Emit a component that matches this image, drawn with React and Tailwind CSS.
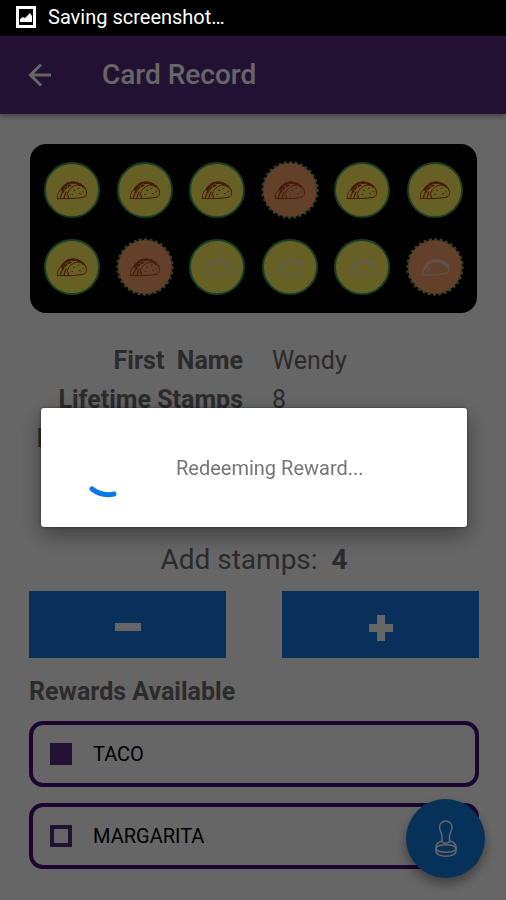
import { useState } from 'react';

const stamps = [
    { filled: true },
    { filled: true },
    { filled: true },
    { filled: true, reward: true },
    { filled: true },
    { filled: true },
    { filled: true },
    { filled: true, reward: true },
    { filled: false },
    { filled: false },
    { filled: false },
    { filled: false, reward: true },
];

const customer = [
    { label: 'First\u00a0 Name', value: 'Wendy' },
    { label: 'Lifetime Stamps', value: '8' },
    { label: 'Rewards Available', value: '2' },
];

function Taco({ color, filled }) {
    return (
        <svg viewBox="0 0 64 40" className={`absolute inset-0 m-auto w-8 h-5 ${color}`} fill="none" stroke="currentColor" strokeLinecap="round" strokeLinejoin="round">
            {filled ? (
                <>
                    <path d="M3 37 C12 38 48 37 56 34 C63 31 62 23 58 17 C51 6 38 2 27 5 C18 8 12 14 9 20 C3 26 2 32 3 37 Z" strokeWidth="2" />
                    <path d="M22 31 C24 20 31 12 43 10 C51 9 57 13 60 19" strokeWidth="2" />
                    <path d="M12 19 C16 12 22 7 28 6 C36 4 46 7 54 13" strokeWidth="5" strokeDasharray="7 5" />
                    <path d="M13 25 C17 17 23 12 32 10" strokeWidth="4" strokeDasharray="4 5" />
                    <path d="M17 31 L20 24 M9 35 L11 28 M16 36 L17 32 M24 36 L25 32" strokeWidth="2.500" />
                    <path d="M32 29 L33 29 M35 20 L37 21 M44 17 L46 16 M47 27 L49 28 M54 23 L54 24" strokeWidth="2" />
                </>
            ) : (
                <>
                    <path d="M12 22 C17 12 25 7 34 7 C45 7 52 11 57 18" strokeWidth="7" />
                    <path d="M5 35 C15 36 45 37 56 32 C60 29 60 23 57 18 M5 35 L12 22 M17 29 L22 20" strokeWidth="3" />
                </>
            )}
        </svg>
    );
}

function Stamp({ filled, reward }) {
    return (
        <div className="relative size-14">
            <svg viewBox="0 0 56 56" className="size-14 overflow-visible">
                <circle cx="28" cy="28" r="27" fill={reward ? '#f5a068' : '#fff05c'} />
                <circle
                    cx="28"
                    cy="28"
                    r={reward ? 27.5 : 27}
                    fill="none"
                    stroke={reward ? '#8a9a60' : '#38a060'}
                    strokeWidth={reward ? 2.5 : 2}
                    strokeLinecap="round"
                    strokeDasharray={reward ? '1 4.4' : undefined}
                />
            </svg>
            <Taco filled={filled} color={filled ? (reward ? 'text-[#ae4524]' : 'text-[#ae3c1c]') : reward ? 'text-[#f0c8b4]' : 'text-[#f6ecb0]'} />
        </div>
    );
}

function Reward({ name, checked, onChange }) {
    return (
        <label className="flex items-center gap-[21px] h-[66px] px-[17px] border-4 border-[#42107c] rounded-[14px] text-xl text-black">
            <input
                type="checkbox"
                checked={checked}
                onChange={onChange}
                className="appearance-none size-[22px] border-4 border-[#592b82] checked:bg-[#592b82]"
            />
            {name}
        </label>
    );
}

function App() {
    const [count, setCount] = useState(4);
    const [selected, setSelected] = useState({ TACO: true, MARGARITA: false });

    const toggle = (name) => setSelected({ ...selected, [name]: !selected[name] });

    return (
        <div className="min-h-screen bg-white font-[Roboto,sans-serif] text-[#6b6b6b]">
            {/* Android status bar, stays above the dimmed page */}
            <div className="relative z-30 flex items-center gap-3 h-9 px-4 pb-0.5 bg-black text-white text-xl">
                <svg viewBox="0 0 20 22" className="w-5 h-[22px]">
                    <path fill="#fff" fillRule="evenodd" d="M0 0h20v22H0z M3 3v16h14V3z" />
                    <path fill="#fff" d="M4 16v-3l3-2 2 1 5-5 2 3v6z" />
                </svg>
                <span>Saving screenshot…</span>
            </div>

            <header className="relative flex items-center h-[78px] px-7 gap-[50px] bg-[#592b82] text-white shadow-[0_2px_6px_rgba(0,0,0,0.4)]">
                <button type="button" aria-label="Back">
                    <svg viewBox="0 0 24 24" className="size-6" fill="none" stroke="currentColor" strokeWidth="3">
                        <path d="M23 12H3M13 1.500L2.500 12L13 22.500" />
                    </svg>
                </button>
                <h1 className="text-[28px] leading-8 font-medium">Card Record</h1>
            </header>

            <main className="pl-[29px] pr-[27px] pt-[30px]">
                <div className="grid grid-cols-6 justify-items-center gap-y-[21px] ml-px mr-0.5 px-1.5 py-[18px] bg-black rounded-2xl">
                    {stamps.map((stamp, i) => (
                        <Stamp key={i} {...stamp} />
                    ))}
                </div>

                <dl className="grid grid-cols-[214px_1fr] gap-x-[29px] mt-7 text-[25px] leading-[39px]">
                    {customer.map((row) => (
                        <div key={row.label} className="contents">
                            <dt className="text-right font-bold whitespace-nowrap">{row.label}</dt>
                            <dd>{row.value}</dd>
                        </div>
                    ))}
                </dl>

                <p className="mt-[84px] text-center text-[28px] leading-9">
                    Add stamps:&nbsp; <b>{count}</b>
                </p>

                <div className="flex gap-14 mt-[13px]">
                    <button type="button" aria-label="Remove stamp" onClick={() => setCount(count - 1)} className="flex flex-1 items-center justify-center h-[67px] pt-1 bg-[#1478e1] text-white">
                        <svg viewBox="0 0 26 26" className="size-[26px]" fill="currentColor">
                            <path d="M0 9h26v8H0z" />
                        </svg>
                    </button>
                    <button type="button" aria-label="Add stamp" onClick={() => setCount(count + 1)} className="flex flex-1 items-center justify-center h-[67px] pt-1.5 bg-[#1478e1] text-white">
                        <svg viewBox="0 0 26 26" className="size-[26px]" fill="currentColor">
                            <path d="M9 0h8v9h8v8h-8v9H9v-9H1V9h8z" />
                        </svg>
                    </button>
                </div>

                <h2 className="mt-[18px] text-[25px] leading-8 font-bold">Rewards Available</h2>
                <div className="flex flex-col gap-4 mt-[13px] pb-[30px]">
                    {Object.keys(selected).map((name) => (
                        <Reward key={name} name={name} checked={selected[name]} onChange={() => toggle(name)} />
                    ))}
                </div>
            </main>

            <button
                type="button"
                aria-label="Stamp card"
                className="fixed right-[21px] bottom-[22px] flex items-center justify-center size-[79px] rounded-full bg-[#107cdc] text-white shadow-[0_6px_12px_rgba(0,0,0,0.4)]"
            >
                <svg viewBox="0 0 24 38" className="w-6 h-[38px]" fill="none" stroke="currentColor" strokeWidth="1.500">
                    <path d="M8 22V17C8 13 5.500 11 5.500 7A6.200 6 0 0 1 18 7C18 11 15.500 13 15.500 17V22" />
                    <path d="M8 21C4 22 2 24 2 27V31C2 38 22 38 22 31V27C22 24 20 22 15.500 21" />
                    <path d="M8 21C7 24 16.500 24 15.500 21" />
                    <ellipse cx="12" cy="28.500" rx="10" ry="3.800" />
                </svg>
            </button>

            <div className="fixed inset-0 z-20 flex items-center justify-center pt-[35px] pl-[41px] pr-[39px] bg-black/60">
                <div role="dialog" aria-label="Redeeming Reward" className="flex items-center w-full h-[119px] pl-10 gap-[39px] bg-white rounded-[3px] shadow-[0_0_3px_rgba(0,0,0,0.5),0_8px_22px_rgba(0,0,0,0.4)]">
                    <svg viewBox="0 0 56 60" className="w-14 h-15 text-[#0a78e6]" fill="none" stroke="currentColor" strokeWidth="5" strokeLinecap="round">
                        <path d="M11 51A27 27 0 0 0 33 56" />
                    </svg>
                    <p className="text-xl text-[#757575]">Redeeming Reward...</p>
                </div>
            </div>
        </div>
    );
}

export default App;
